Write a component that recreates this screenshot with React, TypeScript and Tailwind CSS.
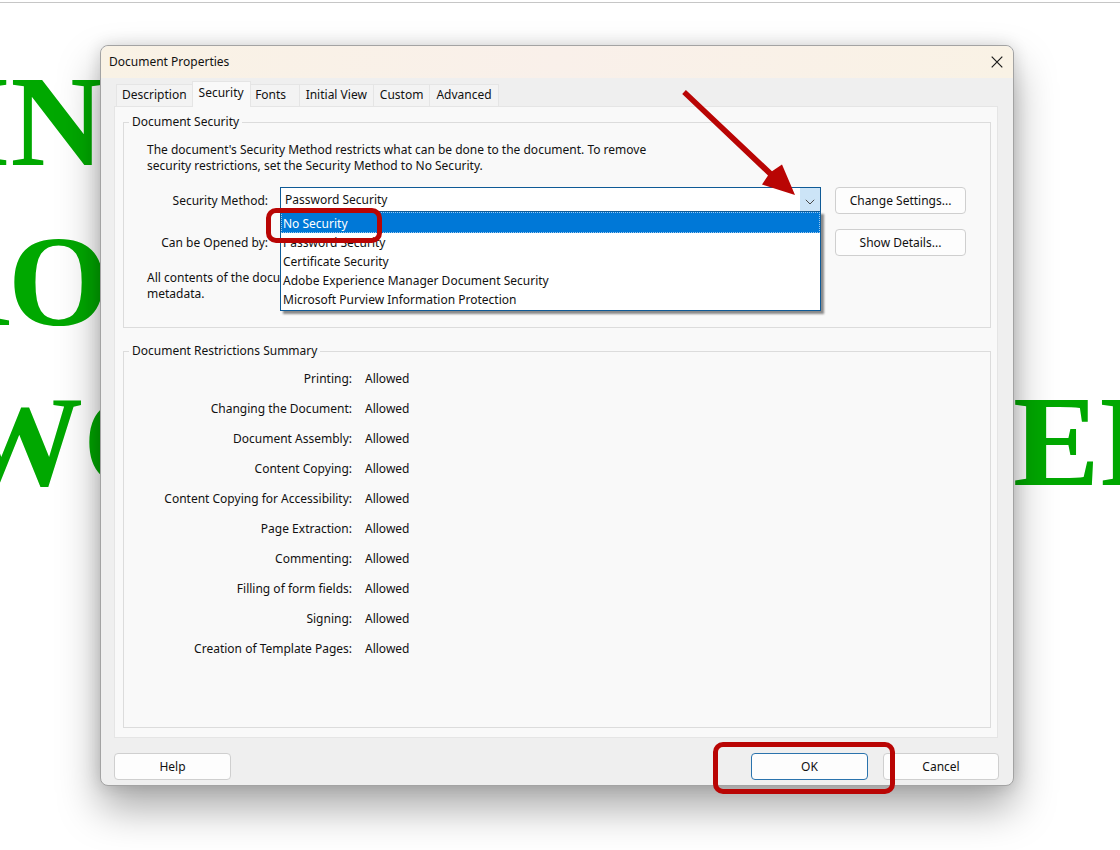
import { useState } from "react";

const tabs = ["Description", "Security", "Fonts", "Initial View", "Custom", "Advanced"];

const methods = [
  "No Security",
  "Password Security",
  "Certificate Security",
  "Adobe Experience Manager Document Security",
  "Microsoft Purview Information Protection",
];

const restrictions = [
  ["Printing:", "Allowed"],
  ["Changing the Document:", "Allowed"],
  ["Document Assembly:", "Allowed"],
  ["Content Copying:", "Allowed"],
  ["Content Copying for Accessibility:", "Allowed"],
  ["Page Extraction:", "Allowed"],
  ["Commenting:", "Allowed"],
  ["Filling of form fields:", "Allowed"],
  ["Signing:", "Allowed"],
  ["Creation of Template Pages:", "Allowed"],
];

const buttonBase =
  "flex h-[27px] items-center justify-center rounded border bg-[#fdfdfd] text-center";

function Page() {
  return (
    <div
      aria-hidden="true"
      className="absolute inset-0 overflow-hidden bg-white pt-[2px] font-['Liberation_Serif',serif] text-[130px] leading-[160px] font-bold whitespace-nowrap text-[#00a800]"
    >
      <div className="h-px bg-[#c6c6c6]" />
      <div className="mt-[38px]">
        <p className="-ml-10">IN</p>
        <p className="-ml-[86px]">RO</p>
        <p className="-ml-[47px] flex justify-between">
          <span>WO</span>
          <span className="w-[107px]">ER</span>
        </p>
      </div>
    </div>
  );
}

function TabStrip() {
  return (
    <div role="tablist" className="flex h-7 items-end px-[15px]">
      {tabs.map((tab) =>
        tab === "Security" ? (
          <button
            key={tab}
            role="tab"
            aria-selected="true"
            className="relative -mb-px h-[26px] border border-b-0 border-[#e5e5e5] bg-[#f9f9f9] px-[6px] pb-[3px]"
          >
            {tab}
          </button>
        ) : (
          <button
            key={tab}
            role="tab"
            aria-selected="false"
            className={
              tab === "Fonts"
                ? "h-[22px] w-[49px] border-t border-r border-[#e5e5e5] bg-[#f3f3f3] pr-2 pb-px"
                : "h-[22px] border-t border-r border-[#e5e5e5] bg-[#f3f3f3] px-[6px] pb-px first:border-r-0 first:border-l first:px-[5px]"
            }
          >
            {tab}
          </button>
        ),
      )}
    </div>
  );
}

function MethodPicker() {
  const [method, setMethod] = useState("Password Security");
  return (
    <div className="relative h-[27px]">
      <select
        id="method"
        value={method}
        onChange={(e) => setMethod(e.target.value)}
        className="h-[25px] w-full appearance-none border border-[#0f5a96] bg-white px-1 outline-none"
      >
        {methods.map((m) => (
          <option key={m}>{m}</option>
        ))}
      </select>
      <span className="pointer-events-none absolute top-px right-px flex h-[23px] w-5 items-center justify-center bg-[#cce4f7] pt-1">
        <svg width="10" height="6" viewBox="0 0 10 6" fill="none" stroke="#4a4a4a">
          <path d="M0.8 0.8 5 5 9.2 0.8" />
        </svg>
      </span>
      <ul
        role="listbox"
        aria-label="Security methods"
        className="absolute inset-x-0 top-6 z-10 border border-[#0f5a96] bg-white pb-px shadow-[3px_3px_2px_rgba(0,0,0,0.45)]"
      >
        {methods.map((m) => (
          <li
            key={m}
            role="option"
            aria-selected={m === "No Security"}
            onClick={() => setMethod(m)}
            className="h-[19px] border border-transparent px-px leading-[17px] aria-selected:h-[21px] aria-selected:border-dotted aria-selected:border-[#9cc8ee] aria-selected:bg-[#0078d7] aria-selected:leading-[21px] aria-selected:text-white"
          >
            {m}
          </li>
        ))}
      </ul>
      <div className="pointer-events-none absolute top-[21px] -left-[14px] z-20 h-[35px] w-[116px] rounded-[10px] border-[5px] border-[#b90504]" />
      <svg
        className="pointer-events-none absolute right-[25px] bottom-[18px] z-20"
        width="114"
        height="106"
        viewBox="0 0 114 106"
        fill="#b90504"
      >
        <path d="M3.9 0 0.2 4 86 85.5 80 94.5 113 105 100 74.5 90 81.2Z" />
      </svg>
    </div>
  );
}

export default function App() {
  return (
    <div className="relative min-h-screen overflow-hidden font-['Noto_Sans',sans-serif] text-[12px] leading-4 text-[#111]">
      <Page />
      <section
        role="dialog"
        aria-labelledby="title"
        className="relative mt-[45px] mr-[106px] mb-16 ml-[100px] rounded-lg border border-[#a3a3a3] bg-[#efefef] shadow-[0_22px_42px_rgba(0,0,0,0.34),0_0_16px_rgba(0,0,0,0.14)]"
      >
        <header className="flex h-8 items-center justify-between rounded-t-lg bg-linear-to-r from-[#f9f2e5] via-[#f9f0ea] to-[#f9f2e5] pr-[10px] pl-2">
          <h1 id="title">Document Properties</h1>
          <button aria-label="Close">
            <svg width="12" height="12" viewBox="0 0 12 12" stroke="#1a1a1a" strokeWidth="1.2">
              <path d="M0.7 0.7 11.3 11.3M11.3 0.7 0.7 11.3" />
            </svg>
          </button>
        </header>

        <TabStrip />

        <div className="mr-[15px] ml-[13px] border border-[#e5e5e5] bg-[#f9f9f9] pt-[7px] pr-[6px] pb-[9px] pl-2">
          <fieldset className="min-w-0 border border-[#dcdcdc] pb-[25px]">
            <legend className="ml-[5px] px-[3px]">Document Security</legend>
            <p className="pt-3 pl-[23px]">
              The document's Security Method restricts what can be done to the document. To remove
              <br />
              security restrictions, set the Security Method to No Security.
            </p>
            <div className="mt-[13px] mr-6 grid grid-cols-[144px_1fr_131px] gap-y-[15px]">
              <label htmlFor="method" className="self-center text-right">
                Security Method:
              </label>
              <div className="pr-[14px] pl-3">
                <MethodPicker />
              </div>
              <button className={`${buttonBase} border-[#cfcfcf]`}>Change Settings...</button>
              <span className="self-center text-right">Can be Opened by:</span>
              <span />
              <button className={`${buttonBase} border-[#cfcfcf]`}>Show Details...</button>
            </div>
            <p className="pt-[14px] pl-[23px]">
              All contents of the docu
              <br />
              metadata.
            </p>
          </fieldset>

          <fieldset className="mt-[15px] min-w-0 border border-[#dcdcdc] pb-[63px]">
            <legend className="ml-[5px] px-[3px]">Document Restrictions Summary</legend>
            <table className="mt-[5px]">
              <tbody>
                {restrictions.map(([name, value]) => (
                  <tr key={name} className="h-[30px]">
                    <th scope="row" className="w-[228px] p-0 text-right font-normal whitespace-nowrap">
                      {name}
                    </th>
                    <td className="py-0 pr-0 pl-[13px]">{value}</td>
                  </tr>
                ))}
              </tbody>
            </table>
          </fieldset>
        </div>

        <footer className="flex justify-between pt-[15px] pr-[14px] pb-[5px] pl-[13px]">
          <button className={`${buttonBase} w-[117px] border-[#cfcfcf]`}>Help</button>
          <div className="flex gap-[15px]">
            <div className="relative">
              <button className={`${buttonBase} w-[117px] border-[#2a73ad]`}>OK</button>
              <div className="pointer-events-none absolute -top-[11px] -left-[38px] z-10 h-[52px] w-[182px] rounded-[10px] border-[5px] border-[#b90504]" />
            </div>
            <button className={`${buttonBase} w-[116px] border-[#cfcfcf]`}>Cancel</button>
          </div>
        </footer>
      </section>
    </div>
  );
}
